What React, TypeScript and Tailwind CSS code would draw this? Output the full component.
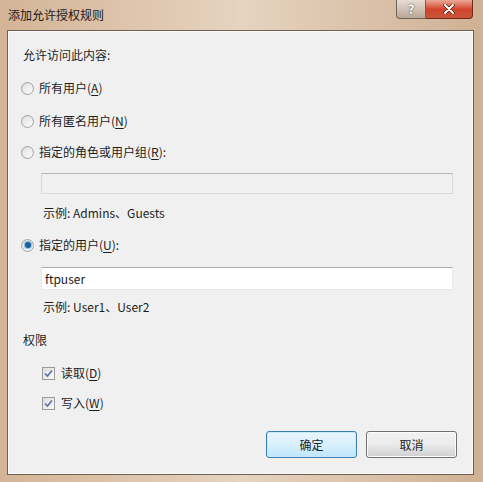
import React from "react";

const font = { fontFamily: '"Noto Sans CJK SC", "Noto Sans", sans-serif' };

const Radio = ({ checked }: { checked?: boolean }) => (
  <span className="relative flex h-[13px] w-[13px] shrink-0 items-center justify-center rounded-full border border-[#a4a4a4] bg-gradient-to-br from-[#dadada] to-[#f7f7f7]">
    <span className="h-[9px] w-[9px] rounded-full bg-gradient-to-br from-[#e2e2e2] to-[#fbfbfb]" />
    {checked && (
      <span className="absolute h-[6px] w-[6px] rounded-full bg-[#1f5f99] shadow-[0_0_1px_1px_#7cb9e6]" />
    )}
  </span>
);

const Check = () => (
  <span className="flex h-[13px] w-[13px] shrink-0 items-center justify-center border border-[#9a9a9a] bg-gradient-to-br from-[#dcdcdc] to-[#fafafa]">
    <svg width="9" height="9" viewBox="0 0 9 9">
      <path d="M1 4.5 L3.5 7 L8 1.5" fill="none" stroke="#5670a8" strokeWidth="1.6" />
    </svg>
  </span>
);

const Label = ({ text, k, colon }: { text: string; k: string; colon?: boolean }) => (
  <span className="text-[12px] leading-[16px] text-[#1e1e1e]">
    {text}(<span className="underline underline-offset-2">{k}</span>){colon ? ":" : ""}
  </span>
);

export default function App() {
  return (
    <div
      className="flex h-[482px] w-[483px] flex-col bg-gradient-to-r from-[#d4b496] via-[#e6d3c0] to-[#cfb194]"
      style={font}
    >
      {/* title bar */}
      <div className="flex h-[30px] shrink-0 items-start justify-between pl-[8px] pr-[10px]">
        <span className="mt-[7px] text-[12px] leading-[16px] text-[#1a1a1a]">添加允许授权规则</span>
        <div className="flex">
          <div className="flex h-[19px] w-[30px] items-center justify-center rounded-bl-[4px] border border-t-0 border-[#6e6253] bg-gradient-to-b from-[#e8ddd2] to-[#b9a898] text-[12px] font-bold leading-none text-white [text-shadow:0_0_2px_#333]">
            ?
          </div>
          <div className="flex h-[19px] w-[47px] items-center justify-center rounded-br-[4px] border border-l-0 border-t-0 border-[#6e2a1e] bg-gradient-to-b from-[#e9a898] via-[#d2432a] to-[#c8553c]">
            <svg width="12" height="10" viewBox="0 0 12 10">
              <path d="M2 1 L10 9 M10 1 L2 9" stroke="#5a1a10" strokeWidth="3.4" strokeLinecap="round" />
              <path d="M2 1 L10 9 M10 1 L2 9" stroke="#fff" strokeWidth="2" strokeLinecap="round" />
            </svg>
          </div>
        </div>
      </div>

      {/* content */}
      <div className="ml-[7px] mr-[9px] flex h-[445px] flex-col border border-[#6f6152] bg-[#f0f0f0] pl-[12px] pt-[16px] shadow-[inset_0_0_0_1px_#fbf8f5]">
        <div className="pl-[3px] text-[12px] leading-[16px] text-[#1e1e1e]">允许访问此内容:</div>

        <div className="mt-[17px] flex h-[16px] items-center gap-[5px] pl-[1px]">
          <Radio />
          <Label text="所有用户" k="A" />
        </div>
        <div className="mt-[17px] flex h-[16px] items-center gap-[5px] pl-[1px]">
          <Radio />
          <Label text="所有匿名用户" k="N" />
        </div>
        <div className="mt-[15px] flex h-[16px] items-center gap-[5px] pl-[1px]">
          <Radio />
          <Label text="指定的角色或用户组" k="R" colon />
        </div>
        <div className="ml-[21px] mr-[20px] mt-[13px] h-[21px] border border-[#d8d8d8] border-t-[#b9b9b9] bg-[#f0f0f0]" />
        <div className="mt-[11px] pl-[23px] text-[12px] leading-[16px] text-[#1e1e1e]">示例: Admins、Guests</div>

        <div className="mt-[16px] flex h-[16px] items-center gap-[5px] pl-[1px]">
          <Radio checked />
          <Label text="指定的用户" k="U" colon />
        </div>
        <div className="ml-[21px] mr-[20px] mt-[14px] flex h-[23px] items-center border border-[#e3e9ef] border-t-[#abadb3] bg-white pl-[3px] text-[12px] text-[#1a1a1a]">
          ftpuser
        </div>
        <div className="mt-[9px] pl-[23px] text-[12px] leading-[16px] text-[#1e1e1e]">示例: User1、User2</div>

        <div className="mt-[17px] pl-[3px] text-[12px] leading-[16px] text-[#1e1e1e]">权限</div>
        <div className="mt-[17px] flex h-[16px] items-center gap-[6px] pl-[22px]">
          <Check />
          <Label text="读取" k="D" />
        </div>
        <div className="mt-[14px] flex h-[16px] items-center gap-[6px] pl-[22px]">
          <Check />
          <Label text="写入" k="W" />
        </div>

        <div className="mr-[16px] mt-[20px] flex justify-end gap-[9px]">
          <button className="flex h-[27px] w-[91px] items-center justify-center rounded-[3px] border border-[#3c7fb1] bg-gradient-to-b from-[#eaf6fd] via-[#d9f0fc] to-[#bee6fd] text-[12px] text-[#1e1e1e] shadow-[inset_0_0_0_1px_#c7e9fb]">
            确定
          </button>
          <button className="flex h-[27px] w-[91px] items-center justify-center rounded-[3px] border border-[#707070] bg-gradient-to-b from-[#f2f2f2] via-[#ebebeb] to-[#cfcfcf] text-[12px] text-[#1e1e1e] shadow-[inset_0_0_0_1px_#fcfcfc]">
            取消
          </button>
        </div>
      </div>
    </div>
  );
}
